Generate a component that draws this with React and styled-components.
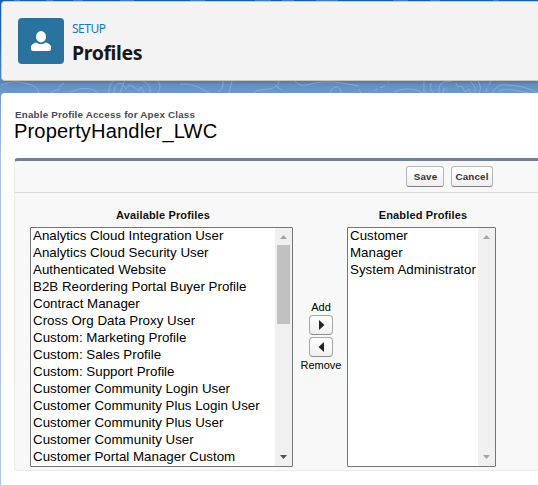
import React from "react";
import styled, { createGlobalStyle } from "styled-components";

const Global = createGlobalStyle`
  * { box-sizing: border-box; }
  body { margin: 0; overflow: hidden; background: #fff; font-family: "Liberation Sans", Arial, sans-serif; }
`;
const Page = styled.div`
  position: relative;
  width: 538px;
  height: 485px;
  padding: 1px 0 0 1px;
  overflow: hidden;
  background: linear-gradient(#195ea5 0, #2c69ad 40px, #5c89bd 81px, #6e9acb 93px, #a9c0e8 160px, #b0c4e9 100%);
`;
const Contours = styled.svg`
  position: absolute;
  left: 0;
  top: 0;
  fill: none;
  stroke: #94b5da;
  stroke-width: 1;
  opacity: 0.75;
`;
const Header = styled.header`
  position: relative;
  display: flex;
  align-items: flex-start;
  gap: 8px;
  height: 80px;
  padding: 16px;
  background: #f3f3f3;
  border: 1px solid #c9c7c5;
  border-right: 0;
  border-radius: 4px 0 0 4px;
  box-shadow: 0 2px 2px rgba(0, 0, 0, 0.1);
`;
const IconTile = styled.div`
  width: 46px;
  height: 46px;
  border-radius: 4px;
  background: #2a739e;
`;
const HeaderText = styled.div`
  display: flex;
  flex-direction: column;
  font-family: "Noto Sans", "Open Sans", sans-serif;
`;
const Eyebrow = styled.span`
  height: 21px;
  font-size: 12px;
  line-height: 22px;
  letter-spacing: -0.5px;
  color: #1d76b3;
`;
const PageTitle = styled.h1`
  margin: 0;
  font-size: 19.5px;
  line-height: 27px;
  font-weight: 700;
  letter-spacing: -0.4px;
  color: #181818;
`;
const Content = styled.main`
  position: relative;
  height: 392px;
  margin-top: 12px;
  padding: 16px 0 0 13px;
  background: #fff;
  border-radius: 4px 0 0 0;
`;
const Subheading = styled.div`
  height: 12px;
  padding-left: 1px;
  font-size: 9.8px;
  line-height: 12px;
  font-weight: 700;
  letter-spacing: 0.2px;
  color: #4a4a56;
`;
const ClassName = styled.h2`
  margin: 0 0 17px;
  font-size: 20.1px;
  line-height: 20px;
  font-weight: 400;
  letter-spacing: 0.14px;
  color: #000;
`;
const Panel = styled.section`
  height: 313px;
  background: #f8f8f8;
  border: 1px solid #eaeaea;
  border-top: 3px solid #747e96;
  border-right: 0;
  border-radius: 4px 0 0 4px;
`;
const Toolbar = styled.div`
  display: flex;
  gap: 7px;
  height: 32px;
  padding: 5px 0 0 391px;
  border-bottom: 1px solid #dbdbdb;
`;
const Button = styled.button`
  width: ${(p) => p.$width}px;
  height: 21px;
  padding: 0 0 0 ${(p) => p.$inset || 0}px;
  border: 1px solid #b5b5b5;
  border-bottom-color: #7f7f7f;
  border-radius: 3px;
  background: linear-gradient(#fff, #f0f0f0);
  font: 700 9.8px/17px "Liberation Sans", Arial, sans-serif;
  letter-spacing: 0.15px;
  color: #333;
`;
const Duel = styled.div`
  display: flex;
  padding: 15px 0 0 15px;
`;
const Column = styled.div`
  width: ${(p) => p.$width}px;
`;
const Caption = styled.div`
  height: 19px;
  padding-left: 3px;
  font-size: 11px;
  line-height: 14px;
  font-weight: 700;
  text-align: center;
  letter-spacing: 0.15px;
  color: #111;
`;
const ListBox = styled.div`
  display: flex;
  height: 240px;
  border: 1px solid #767676;
  border-radius: 1px;
  background: #fff;
`;
const Options = styled.ul`
  flex: 1;
  min-width: 0;
  margin: 0;
  padding: 0 0 0 2px;
  list-style: none;
  overflow: hidden;
`;
const Option = styled.li`
  height: 17px;
  font-size: 13.333px;
  line-height: 16px;
  white-space: nowrap;
  color: #000;
`;
const Scrollbar = styled.div`
  display: flex;
  flex-direction: column;
  align-items: center;
  width: 17px;
  background: #f0f0f0;
`;
const ScrollArrow = styled.svg`
  display: block;
  width: 17px;
  height: 17px;
  fill: ${(p) => (p.$active ? "#505050" : "#a3a3a3")};
`;
const Track = styled.div`
  flex: 1;
  width: 13px;
`;
const Thumb = styled.div`
  height: 79px;
  background: #c1c1c1;
`;
const Movers = styled.div`
  display: flex;
  flex-direction: column;
  align-items: center;
  width: 54px;
  padding: 92px 0 0 2px;
`;
const MoverLabel = styled.span`
  height: 15px;
  font-size: 11px;
  line-height: ${(p) => p.$leading || 15}px;
  color: #000;
`;
const MoverButton = styled.button`
  display: block;
  width: 24px;
  height: 20px;
  margin-bottom: 2px;
  padding: 0;
  border: 1px solid #a7a7a7;
  border-bottom-color: #8d8d8d;
  border-radius: 4px;
  background: linear-gradient(#fff, #efefef);
  svg { display: block; fill: #222; }
`;

const available = [
  "Analytics Cloud Integration User", "Analytics Cloud Security User", "Authenticated Website",
  "B2B Reordering Portal Buyer Profile", "Contract Manager", "Cross Org Data Proxy User",
  "Custom: Marketing Profile", "Custom: Sales Profile", "Custom: Support Profile",
  "Customer Community Login User", "Customer Community Plus Login User",
  "Customer Community Plus User", "Customer Community User", "Customer Portal Manager Custom",
];
const enabled = ["Customer", "Manager", "System Administrator"];

function ProfileList({ title, items, width, scrollable }) {
  return (
    <Column $width={width}>
      <Caption>{title}</Caption>
      <ListBox>
        <Options>{items.map((name) => <Option key={name}>{name}</Option>)}</Options>
        <Scrollbar>
          <ScrollArrow viewBox="0 0 17 17"><path d="M5 11h7L8.5 7z" /></ScrollArrow>
          <Track>{scrollable && <Thumb />}</Track>
          <ScrollArrow $active={scrollable} viewBox="0 0 17 17"><path d="M5 6h7L8.500 10z" /></ScrollArrow>
        </Scrollbar>
      </ListBox>
    </Column>
  );
}

export default function App() {
  return (
    <>
      <Global />
      <Page>
        <Contours width="538" height="94" viewBox="0 0 538 94">
          <path d="M1 85q12-5 23-2 14 2 15 10M50 93q5-3 10-4M64 83l-5 4M71 92q12-6 23-2l5 3M109 93q0-10 5-12M114 93q0-8 5-10l4 1 2-3M120 93l3-8 3 4 3-4 5 2 5 4 2-4 4 7M143 81q8 3 7 12M158 81q4 6 0 12" />
          <path d="M180 84q15-1 29 9M218 92q6-3 5-11M229 93l3-12M254 93q3-4 15-4 10-2 10-8M275 86l7 4M295 81q5 6 12 4 15-5 35-2l17 3M330 93q4-8 8-6 4 2 3 6M359 89l2 4M373 91l4-2M380 88l5-2M387 83l2-2M394 92q10-5 22-2l7 3M424 81v12M431 83q-2 6 2 10M439 93q-1-9 5-11l8-1M443 93l1-5 3 2M456 83l2 4 4-1 3 6 4-3 2 4M471 82q5 4 4 11M478 81q4 6 1 12M486 92l1-4M489 85l2-4M492 93q6-10 15-8 20 1 31 8M499 91q6-3 15-1l14 3" />
          <path d="M14 0h6M46 0h7M73 0h10M120 0h14M190 0h15M255 0h16M282 0h12M316 0h22M393 0h15M430 0h10M493 0h6" />
        </Contours>
        <Header>
          <IconTile>
            <svg width="46" height="46" viewBox="0 0 46 46" fill="#fff">
              <ellipse cx="23" cy="18.800" rx="5" ry="5.700" />
              <path d="M18.300 24.600q1.800 1.700 4.700 1.700t4.700-1.700c3 .9 5.300 2 5.300 4.700v1.600q0 2-2 2H15q-2 0-2-2v-1.600c0-2.700 2.300-3.800 5.300-4.700Z" />
            </svg>
          </IconTile>
          <HeaderText><Eyebrow>SETUP</Eyebrow><PageTitle>Profiles</PageTitle></HeaderText>
        </Header>
        <Content>
          <Subheading>Enable Profile Access for Apex Class</Subheading>
          <ClassName>PropertyHandler_LWC</ClassName>
          <Panel>
            <Toolbar><Button $width={38} $inset={1}>Save</Button><Button $width={42}>Cancel</Button></Toolbar>
            <Duel>
              <ProfileList title="Available Profiles" items={available} width={263} scrollable />
              <Movers>
                <MoverLabel>Add</MoverLabel>
                <MoverButton aria-label="Add"><svg width="22" height="18"><path d="M9 4v10l5.500-5z" /></svg></MoverButton>
                <MoverButton aria-label="Remove"><svg width="22" height="18"><path d="M14 4v10L8.500 9z" /></svg></MoverButton>
                <MoverLabel $leading={13}>Remove</MoverLabel>
              </Movers>
              <ProfileList title="Enabled Profiles" items={enabled} width={149} />
            </Duel>
          </Panel>
        </Content>
      </Page>
    </>
  );
}
